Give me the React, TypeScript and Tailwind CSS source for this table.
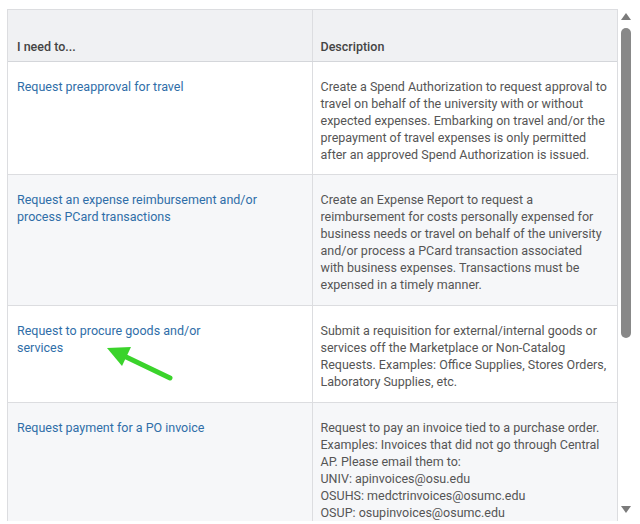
import React from "react";

const rows: { left: string; desc: string; bg: string; pb: string; }[] = [
  {
    left: "Request preapproval for travel",
    desc: "Create a Spend Authorization to request approval to\ntravel on behalf of the university with or without\nexpected expenses. Embarking on travel and/or the\nprepayment of travel expenses is only permitted\nafter an approved Spend Authorization is issued.",
    bg: "bg-white",
    pb: "pb-[11px]",
  },
  {
    left: "Request an expense reimbursement and/or\nprocess PCard transactions",
    desc: "Create an Expense Report to request a\nreimbursement for costs personally expensed for\nbusiness needs or travel on behalf of the university\nand/or process a PCard transaction associated\nwith business expenses. Transactions must be\nexpensed in a timely manner.",
    bg: "bg-[#f6f7f9]",
    pb: "pb-[12px]",
  },
  {
    left: "Request to procure goods and/or\nservices",
    desc: "Submit a requisition for external/internal goods or\nservices off the Marketplace or Non-Catalog\nRequests. Examples: Office Supplies, Stores Orders,\nLaboratory Supplies, etc.",
    bg: "bg-white",
    pb: "pb-[12px]",
  },
  {
    left: "Request payment for a PO invoice",
    desc: "Request to pay an invoice tied to a purchase order.\nExamples: Invoices that did not go through Central\nAP. Please email them to:\nUNIV: apinvoices@osu.edu\nOSUHS: medctrinvoices@osumc.edu\nOSUP: osupinvoices@osumc.edu",
    bg: "bg-[#f6f7f9]",
    pb: "pb-[12px]",
  },
];

export default function App() {
  return (
    <div
      className="w-[640px] h-[524px] bg-white flex overflow-hidden relative"
      style={{ fontFamily: "Roboto, 'Liberation Sans', sans-serif" }}
    >
      <div className="w-[618px] h-[521px] pl-[7px] pt-[9px] overflow-hidden shrink-0">
        <div className="w-[611px] border-l border-r border-t border-[#dcdde0]">
          <div className="grid grid-cols-2 h-[52px] bg-[#f0f1f3] border-b border-[#d4d6da] text-[12.5px] font-medium text-[#444]">
            <div className="flex items-end px-[9px] pb-[4px] border-r border-[#dcdde0]">I need to...</div>
            <div className="flex items-end px-[8px] pb-[4px]">Description</div>
          </div>
          {rows.map((r, i) => (
            <div key={i} className={`grid grid-cols-2 border-b border-[#dcdde0] ${r.bg} text-[12.5px] leading-[17px]`}>
              <div className={`pl-[9px] pr-[10px] pt-[16px] ${r.pb} border-r border-[#dcdde0] text-[#2f6ea8] whitespace-pre-line`}>
                {r.left}
              </div>
              <div className={`pl-[8px] pr-[2px] pt-[16px] ${r.pb} text-[#555] whitespace-pre-line`}>{r.desc}</div>
            </div>
          ))}
        </div>
      </div>
      <div className="w-[15px] h-[524px] shrink-0 flex flex-col items-center pt-[13px]">
        <svg width="10" height="8" viewBox="0 0 10 8">
          <polygon points="5,0 10,7 0,7" fill="#7b7b7b" />
        </svg>
        <div className="mt-[7px] w-[10px] h-[310px] rounded-[5px] bg-[#888]" />
        <div className="flex-1" />
        <svg width="10" height="8" viewBox="0 0 10 8" className="mb-[10px]">
          <polygon points="0,0 10,0 5,7" fill="#7b7b7b" />
        </svg>
      </div>
      <svg className="absolute left-0 top-0 pointer-events-none" width="640" height="524">
        <line x1="170" y1="378" x2="122" y2="355" stroke="#3ad32b" strokeWidth="5" strokeLinecap="round" />
        <polygon points="107,348 131,347 122,366" fill="#3ad32b" />
      </svg>
    </div>
  );
}
